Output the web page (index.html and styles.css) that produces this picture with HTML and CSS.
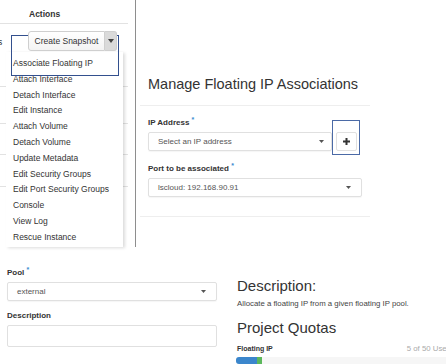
FILE: index.html
```html
<!DOCTYPE html>
<html lang="en">
<head>
<meta charset="UTF-8" />
<meta name="viewport" content="width=device-width, initial-scale=1" />
<title>Floating IP</title>
<link rel="stylesheet" href="styles.css">
</head>
<body>

<div class="shot-top">
  <!-- Instances table with the open actions dropdown -->
  <div class="table-pane">
    <div class="th">Actions</div>
    <div class="tr tr-first">
      <span class="cut">s</span>
      <div class="btn-group">
        <button class="btn">Create Snapshot</button>
        <button class="btn btn-caret">
          <svg width="6" height="4" viewBox="0 0 6 4"><path d="M0 0h6L3 4z" fill="#444"/></svg>
        </button>
      </div>
    </div>
    <div class="tr tr-second"></div>
    <div class="tr tr-third"></div>
    <div class="tr"></div>

    <ul class="menu">
      <li>Associate Floating IP</li>
      <li>Attach Interface</li>
      <li>Detach Interface</li>
      <li>Edit Instance</li>
      <li>Attach Volume</li>
      <li>Detach Volume</li>
      <li>Update Metadata</li>
      <li>Edit Security Groups</li>
      <li>Edit Port Security Groups</li>
      <li>Console</li>
      <li>View Log</li>
      <li>Rescue Instance</li>
    </ul>
    <div class="focus-box"></div>
  </div>

  <!-- Manage Floating IP Associations modal -->
  <div class="modal">
    <h3 class="modal-title">Manage Floating IP Associations</h3>
    <div class="modal-body">
      <div class="form-group">
        <label class="lbl">IP Address <span class="req">*</span></label>
        <div class="input-group">
          <div class="select select-ip">
            <span>Select an IP address</span>
            <svg width="5" height="3" viewBox="0 0 5 3"><path d="M0 0h5L2.5 3z" fill="#555"/></svg>
          </div>
          <button class="btn-add">
            <svg width="7" height="7" viewBox="0 0 7 7"><path d="M2.5 0h2v2.5H7v2H4.5V7h-2V4.5H0v-2h2.5z" fill="#333"/></svg>
          </button>
          <div class="focus-ring"></div>
        </div>
      </div>
      <div class="form-group">
        <label class="lbl">Port to be associated <span class="req">*</span></label>
        <div class="select">
          <span>lscloud: 192.168.90.91</span>
          <svg width="5" height="3" viewBox="0 0 5 3"><path d="M0 0h5L2.5 3z" fill="#555"/></svg>
        </div>
      </div>
    </div>
  </div>
</div>

<div class="shot-bottom">
  <!-- Allocate Floating IP form -->
  <div class="alloc-form">
    <div class="form-group">
      <label class="lbl">Pool <span class="req">*</span></label>
      <div class="select">
        <span>external</span>
        <svg width="5" height="3" viewBox="0 0 5 3"><path d="M0 0h5L2.5 3z" fill="#555"/></svg>
      </div>
    </div>
    <div class="form-group">
      <label class="lbl">Description</label>
      <div class="text-input"></div>
    </div>
  </div>

  <div class="alloc-help">
    <h3 class="help-title">Description:</h3>
    <p class="help-text">Allocate a floating IP from a given floating IP pool.</p>
    <h3 class="help-title quotas">Project Quotas</h3>
    <div class="quota-head">
      <strong>Floating IP</strong>
      <span class="used">5 of 50 Used</span>
    </div>
    <div class="bar">
      <div class="bar-used" style="width: 21px"></div>
      <div class="bar-new" style="width: 5px"></div>
    </div>
  </div>
</div>

</body>
</html>
```

FILE: styles.css
```css
body {
  font-family: "Liberation Sans", Arial, Helvetica, sans-serif;
  color: #333;
  background: #fff;
  margin: 0; padding: 0;
  width: 446px;
  height: 364px;
  overflow: hidden;
}
.shot-top {
  display: flex;
  height: 247px;
}
.table-pane {
  position: relative;
  width: 135px;
  flex: none;
  border-right: 1.5px solid #8e8e8e;
}
.th {
  width: 128px;
  height: 24px;
  box-sizing: border-box;
  padding: 9px 0 0 29px;
  font-size: 8.5px;
  font-weight: bold;
  border-bottom: 1px solid #e2e2e2;
}
.tr {
  width: 128px;
  height: 31px;
  border-bottom: 1px solid #e2e2e2;
}
.tr-first {
  height: 63px;
  display: flex;
  align-items: flex-start;
  padding-top: 7px;
  box-sizing: border-box;
}
.tr-second { height: 36px; }
.tr-third { height: 30px; }
.cut {
  font-size: 8.5px;
  width: 30px;
  margin-top: 6px;
  margin-left: -2px;
}
.btn-group {
  display: flex;
  position: relative;
  z-index: 3;
}
.btn {
  font-family: inherit;
  font-size: 8.5px;
  color: #333;
  height: 20px;
  width: 77px;
  padding: 0;
  background: linear-gradient(#fff, #f3f3f3);
  border: 1px solid #cfcfcf;
  border-radius: 3px 0 0 3px;
}
.btn-caret {
  width: 12px;
  background: #dadada;
  border-left: none;
  border-radius: 0 3px 3px 0;
  display: flex;
  align-items: center;
  justify-content: center;
}
.menu {
  position: absolute;
  left: 6px;
  top: 52px;
  width: 117px;
  height: 195px;
  margin: 0;
  padding: 4px 0 0;
  box-sizing: border-box;
  list-style: none;
  background: #fff;
  box-shadow: 2px 1px 3px rgba(0, 0, 0, 0.14);
  z-index: 1;
}
.menu li {
  font-size: 8.5px;
  line-height: 15.8px;
  padding-left: 7px;
  white-space: nowrap;
}
.focus-box {
  position: absolute;
  left: 11px;
  top: 35px;
  width: 106px;
  height: 39px;
  border: 1.5px solid #33508e;
  z-index: 2;
}
.modal {
  margin-left: 4px;
  width: 230px;
  padding-top: 74px;
}
.modal-title {
  margin: 0;
  padding: 0 8px 11px;
  font-size: 14.5px;
  line-height: 20px;
  font-weight: normal;
  border-bottom: 1px solid #eee;
}
.modal-body {
  padding: 9px 8px 19px;
  border-bottom: 1px solid #eee;
}
.form-group {
  margin-bottom: 10px;
}
.form-group:last-child {
  margin-bottom: 0;
}
.lbl {
  display: block;
  font-size: 8px;
  line-height: 10px;
  font-weight: bold;
  margin-bottom: 4px;
}
.req {
  color: #3a8bd0;
  font-size: 7px;
  vertical-align: 3px;
}
.input-group {
  position: relative;
  display: flex;
  gap: 4px;
}
.select {
  display: flex;
  align-items: center;
  justify-content: space-between;
  height: 19px;
  box-sizing: border-box;
  padding: 0 10px 0 9px;
  font-size: 8px;
  color: #555;
  border: 1px solid #e0e0e0;
  border-radius: 2px;
  box-shadow: 0 1px 1px rgba(0, 0, 0, 0.04);
}
.select-ip {
  width: 184px;
  padding-right: 7px;
}
.btn-add {
  width: 21px;
  height: 19px;
  padding: 0;
  background: #fff;
  border: 1px solid #e0e0e0;
  border-radius: 2px;
  display: flex;
  align-items: center;
  justify-content: center;
}
.focus-ring {
  position: absolute;
  left: 184px;
  top: -12px;
  width: 26px;
  height: 33px;
  border: 1px solid #4b6aa6;
}
.shot-bottom {
  display: flex;
}
.alloc-form {
  width: 210px;
  padding: 18px 0 0 7px;
  flex: none;
}
.text-input {
  height: 20px;
  border: 1px solid #e0e0e0;
  border-radius: 2px;
}
.alloc-help {
  margin-left: 20px;
  width: 214px;
  flex: none;
  padding-top: 30px;
}
.help-title {
  margin: 0;
  font-size: 15px;
  line-height: 18px;
  font-weight: normal;
}
.help-text {
  margin: 4px 0 0;
  font-size: 7.8px;
  line-height: 10px;
  color: #444;
}
.quotas {
  margin-top: 10px;
}
.quota-head {
  display: flex;
  justify-content: space-between;
  margin-top: 7px;
  font-size: 7px;
  line-height: 9px;
}
.used {
  color: #aaa;
  font-size: 7.8px;
}
.bar {
  display: flex;
  height: 7px;
  margin: 4px 0 0 -1px;
  background: #f6f6f6;
  border-radius: 3px 0 0 3px;
  overflow: hidden;
}
.bar-used { background: #3b86cc; }
.bar-new { background: #5cb85c; }
```
